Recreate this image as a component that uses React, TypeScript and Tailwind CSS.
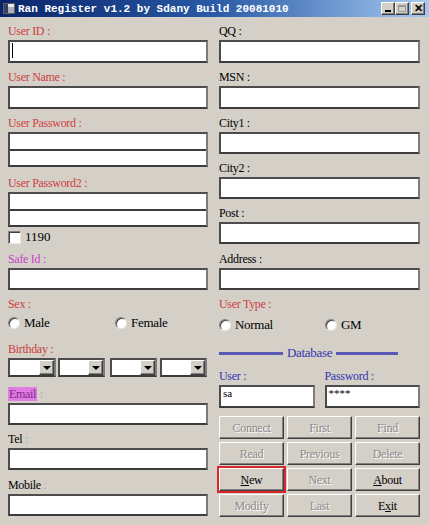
import React from 'react';

// sunken white edit box, classic win32 look
const box =
  'bg-white border-2 border-t-[#4c4c4c] border-l-[#4c4c4c] border-b-[#3c3c3c] border-r-[#7c7c7c]';

const raised =
  'bg-[#d4d0c8] border border-t-white border-l-white border-r-[#404040] border-b-[#404040] shadow-[inset_-1px_-1px_0_#808080]';

interface LabelProps {
  h: string;
  children: React.ReactNode;
  className?: string;
}

const Label: React.FC<LabelProps> = ({ h, children, className = 'text-black' }) => (
  <div className={`${h} flex items-end pb-[2px] leading-[14px] text-[12px] tracking-[-0.3px] ${className}`}>
    {children}
  </div>
);

const Edit: React.FC<{ h?: string; children?: React.ReactNode }> = ({ h = 'h-[23px]', children }) => (
  <div className={`${h} ${box} px-[2px] text-[11px] leading-[13px]`}>{children}</div>
);

const DoubleEdit: React.FC = () => (
  <div className={`h-[35px] ${box} flex flex-col`}>
    <div className="h-[17px] border-b-2 border-[#3c3c3c]" />
    <div className="flex-1" />
  </div>
);

const Radio: React.FC<{ label: string; w?: string }> = ({ label, w = '' }) => (
  <div className={`flex items-center gap-[4px] ${w}`}>
    <span className="w-[12px] h-[12px] rounded-full bg-white border border-t-[#808080] border-l-[#808080] border-b-[#e8e8e8] border-r-[#e8e8e8] shadow-[inset_1px_1px_0_#404040]" />
    <span className="text-[13px] leading-[14px] tracking-[-0.3px]">{label}</span>
  </div>
);

const Combo: React.FC<{ w: string }> = ({ w }) => (
  <div className={`${w} h-[19px] ${box} flex justify-end`}>
    <div className={`w-[15px] h-full ${raised} flex items-center justify-center`}>
      <span className="w-0 h-0 border-l-[4px] border-r-[4px] border-t-[4px] border-l-transparent border-r-transparent border-t-black" />
    </div>
  </div>
);

interface BtnProps {
  text: string;
  u?: number;
  enabled?: boolean;
  focus?: boolean;
}

const Btn: React.FC<BtnProps> = ({ text, u = -1, enabled = false, focus = false }) => (
  <div
    className={`h-[23px] ${raised} flex items-center justify-center text-[12px] tracking-[-0.3px] ${
      enabled ? 'text-black' : 'text-[#8a8a8a] [text-shadow:1px_1px_0_#ffffff]'
    } ${focus ? 'outline-2 outline-offset-0 outline-[#d8282c]' : ''}`}
  >
    {text.split('').map((c, i) => (
      <span key={i} className={i === u ? 'underline' : ''}>
        {c}
      </span>
    ))}
  </div>
);

export default function App() {
  const red = 'text-[#cf3d3d]';
  const magenta = 'text-[#c83ec8]';
  const blue = 'text-[#3434b0]';

  return (
    <div className="w-[429px] h-[525px] overflow-hidden bg-[#d4d0c8] font-['Liberation_Serif',serif] text-black">
      {/* title bar */}
      <div className="h-[17px] flex items-center bg-gradient-to-r from-[#0a246a] via-[#2a5aa6] to-[#a6caf0] pl-[3px] pr-[4px]">
        <div className="w-[12px] h-[11px] bg-[#e8e8e8] border border-[#606060] flex items-end mr-[3px]">
          <div className="w-[4px] h-full bg-[#30406a]" />
          <div className="flex-1 h-[6px] bg-[#b0b0b0]" />
        </div>
        <span className="font-['Liberation_Mono',monospace] font-bold text-[11px] text-white leading-[12px]">
          Ran Register v1.2 by Sdany Build 20081010
        </span>
        <div className="ml-auto flex items-center">
          <div className={`w-[14px] h-[13px] ${raised} flex items-end justify-center pb-[2px]`}>
            <span className="w-[6px] h-[2px] bg-black" />
          </div>
          <div className={`w-[14px] h-[13px] ${raised} flex items-center justify-center`}>
            <span className="w-[8px] h-[7px] border border-t-2 border-[#9a9a9a]" />
          </div>
          <div className={`w-[14px] h-[13px] ml-[2px] ${raised} flex items-center justify-center text-[11px] leading-none font-bold font-['Liberation_Sans',sans-serif]`}>
            ✕
          </div>
        </div>
      </div>

      <div className="grid grid-cols-[200px_201px] gap-x-[11px] pl-[8px]">
        {/* left column */}
        <div className="flex flex-col">
          <Label h="h-[23px]" className={red}>User ID :</Label>
          <Edit>
            <div className="w-px h-[15px] bg-black mt-[1px]" />
          </Edit>
          <Label h="h-[23px]" className={red}>User Name :</Label>
          <Edit />
          <Label h="h-[23px]" className={red}>User Password :</Label>
          <DoubleEdit />
          <Label h="h-[25px]" className={red}>User Password2 :</Label>
          <DoubleEdit />
          <div className="h-[20px] flex items-center gap-[4px]">
            <span className="w-[13px] h-[13px] bg-white border border-t-[#808080] border-l-[#808080] border-b-[#e8e8e8] border-r-[#e8e8e8] shadow-[inset_1px_1px_0_#404040]" />
            <span className="text-[13px] leading-[14px]">1190</span>
          </div>
          <Label h="h-[21px]" className={magenta}>Safe Id :</Label>
          <Edit h="h-[22px]" />
          <Label h="h-[23px]" className={red}>Sex :</Label>
          <div className="h-[20px] flex items-center">
            <Radio label="Male" w="w-[107px]" />
            <Radio label="Female" />
          </div>
          <Label h="h-[25px]" className={red}>Birthday :</Label>
          <div className="flex">
            <Combo w="w-[48px]" />
            <div className="ml-[2px]"><Combo w="w-[47px]" /></div>
            <div className="ml-[5px]"><Combo w="w-[47px]" /></div>
            <div className="ml-[3px]"><Combo w="w-[47px]" /></div>
          </div>
          <Label h="h-[26px]">
            <span className="bg-[#e07ce2] text-[#84288e] px-px">Email</span>
            <span className="text-[#a8a8a8]">&nbsp;:</span>
          </Label>
          <Edit h="h-[22px]" />
          <Label h="h-[23px]">
            Tel<span className="text-[#a8a8a8]">&nbsp;:</span>
          </Label>
          <Edit h="h-[22px]" />
          <Label h="h-[24px]">
            Mobile<span className="text-[#a8a8a8]">&nbsp;:</span>
          </Label>
          <Edit h="h-[22px]" />
        </div>

        {/* right column */}
        <div className="flex flex-col">
          <Label h="h-[23px]">QQ :</Label>
          <Edit />
          <Label h="h-[23px]">MSN :</Label>
          <Edit />
          <Label h="h-[23px]">City1 :</Label>
          <Edit h="h-[22px]" />
          <Label h="h-[23px]">City2 :</Label>
          <Edit h="h-[22px]" />
          <Label h="h-[23px]">Post :</Label>
          <Edit h="h-[22px]" />
          <Label h="h-[24px]">Address :</Label>
          <Edit h="h-[22px]" />
          <Label h="h-[23px]" className={red}>User Type :</Label>
          <div className="h-[24px] flex items-center">
            <Radio label="Normal" w="w-[106px]" />
            <Radio label="GM" />
          </div>

          <div className="h-[32px] flex items-center">
            <div className="w-[64px] h-[3px] bg-[#5a5ab6]" />
            <span className={`px-[4px] text-[13px] leading-[14px] tracking-[-0.3px] ${blue}`}>Database</span>
            <div className="w-[62px] h-[3px] bg-[#5a5ab6]" />
          </div>

          <div className="grid grid-cols-2 gap-x-[10px]">
            <div className="flex flex-col">
              <Label h="h-[16px]" className={blue}>User :</Label>
              <Edit>sa</Edit>
            </div>
            <div className="flex flex-col">
              <Label h="h-[16px]" className={blue}>Password :</Label>
              <Edit>****</Edit>
            </div>
          </div>

          <div className="mt-[8px] grid grid-cols-3 gap-[3px]">
            <Btn text="Connect" />
            <Btn text="First" />
            <Btn text="Find" />
            <Btn text="Read" />
            <Btn text="Previous" />
            <Btn text="Delete" />
            <Btn text="New" u={0} enabled focus />
            <Btn text="Next" />
            <Btn text="About" u={0} enabled />
            <Btn text="Modify" />
            <Btn text="Last" />
            <Btn text="Exit" u={1} enabled />
          </div>
        </div>
      </div>
    </div>
  );
}
